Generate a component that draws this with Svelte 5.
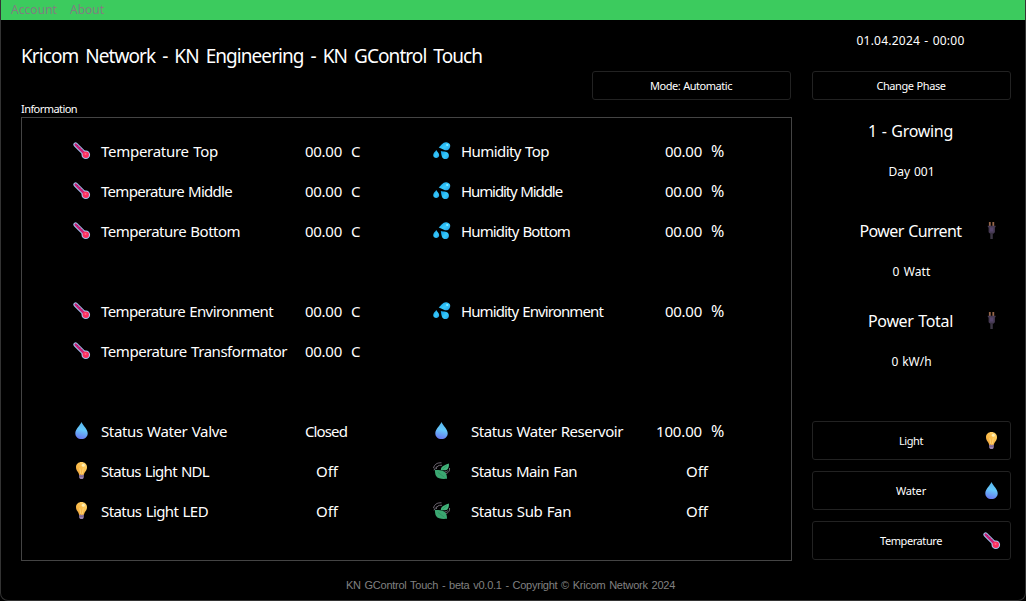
<script>
  const left = [
    { icon: 'thermo', label: 'Temperature Top', w: 117, value: '00.00', unit: 'C' },
    { icon: 'thermo', label: 'Temperature Middle', w: 131, value: '00.00', unit: 'C' },
    { icon: 'thermo', label: 'Temperature Bottom', w: 139, value: '00.00', unit: 'C' },
    null,
    { icon: 'thermo', label: 'Temperature Environment', w: 172, value: '00.00', unit: 'C' },
    { icon: 'thermo', label: 'Temperature Transformator', w: 186, value: '00.00', unit: 'C' },
    null,
    { icon: 'drop', label: 'Status Water Valve', w: 126, value: 'Closed', vw: 42 },
    { icon: 'bulb', label: 'Status Light NDL', w: 108, value: 'Off', vw: 22, shift: 11 },
    { icon: 'bulb', label: 'Status Light LED', w: 107, value: 'Off', vw: 22, shift: 11 }
  ];
  const right = [
    { icon: 'splash', label: 'Humidity Top', w: 88, value: '00.00', unit: '%' },
    { icon: 'splash', label: 'Humidity Middle', w: 101, value: '00.00', unit: '%' },
    { icon: 'splash', label: 'Humidity Bottom', w: 109, value: '00.00', unit: '%' },
    null,
    { icon: 'splash', label: 'Humidity Environment', w: 142, value: '00.00', unit: '%' },
    null,
    null,
    { icon: 'drop', label: 'Status Water Reservoir', w: 152, indent: true, value: '100.00', vw: 46, shift: -9, unit: '%' },
    { icon: 'leaf', label: 'Status Main Fan', w: 106, indent: true, value: 'Off', vw: 22, shift: 21 },
    { icon: 'leaf', label: 'Status Sub Fan', w: 100, indent: true, value: 'Off', vw: 22, shift: 21 }
  ];

  // Spreads the letters so that a caption fills its given width.
  function fit(node, width) {
    const n = node.textContent.length;
    const natural = node.getBoundingClientRect().width;
    node.style.letterSpacing = `${(width - natural) / n}px`;
  }
</script>

{#snippet icon(name)}
  <svg class="icon" width="18" height="18" viewBox="0 0 18 18">
    {#if name === 'thermo'}
      <path d="M2.6 2.6 L12.4 12.4" stroke="#9fc3ee" stroke-width="4.4" stroke-linecap="round" />
      <circle cx="12.8" cy="12.800" r="4.300" fill="#a5c6f4" />
      <path d="M2.700 2.700 L12 12" stroke="#c81f75" stroke-width="2.500" stroke-linecap="round" />
      <path d="M4.900 3.200l-.8.9M7.100 5.300l-.9 1M9.200 7.500l-.8.8" stroke="#5a2c68" stroke-width=".8" />
      <circle cx="12.800" cy="12.800" r="3.200" fill="#fb2f60" />
      <circle cx="12.500" cy="12" r="1" fill="#ff6a89" />
    {:else if name === 'splash'}
      <path d="M5.700 5.600C8 3.500 10-.2 13.400.2c3 .3 4.600 2.700 3.500 5.300-1 2.800-3.700 3.400-6 2.300C9 6.900 7.200 6.300 5.700 5.600z" fill="url(#cyan)" />
      <path d="M3.300 8C2.500 9.500.100 11 .2 13.200c.2 3.600 5.700 3.700 6 .1C6.300 11.100 4 9.700 3.300 8z" fill="url(#cyan)" />
      <path d="M7.800 9c2.700.8 7 .2 7.900 3.200.8 2.700-.8 4.900-3.200 4.900-4.200 0-4-4.800-4.700-8.100z" fill="url(#cyan)" />
      <circle cx="14.200" cy="3" r="1.100" fill="#8aecff" />
    {:else if name === 'drop'}
      <path d="M8.500 0C7.300 3.400 2.300 7 2.300 11.200c0 3.500 2.600 5.800 6.200 5.800s6.200-2.300 6.200-5.800C14.700 7 9.700 3.400 8.500 0z" fill="url(#water)" />
    {:else if name === 'bulb'}
      <path d="M6.100 12.200h4.700v2.500c0 1.500-.8 2.300-2.300 2.300s-2.400-.8-2.400-2.300z" fill="#9a83ad" />
      <path d="M6.200 14.200h4.500" stroke="#65517b" stroke-width=".8" />
      <path d="M8.500 0C5.300 0 3 2.100 3 5.200c0 3.600 2.600 4.400 3 7.400.5.500 4.500.5 5 0 .4-3 3-3.800 3-7.400C14 2.100 11.700 0 8.500 0z" fill="url(#amber)" />
      <path d="M6.800 6.300 7.900 12.200M10.300 6.300 9.200 12.200" stroke="#ffda7e" stroke-width=".8" />
      <circle cx="10.300" cy="3.200" r="1.500" fill="#fff0b6" />
    {:else if name === 'leaf'}
      <path d="M.5 6.200C1.300 2.400 4 .6 8.500.8M3.300 7C3.300 4.300 5.500 3 9 3.200M1 8.300C2 6 3 5.200 4.600 4.500" fill="none" stroke="#716975" stroke-width="1" />
      <path d="M16.500 6c.5 3-1.300 5.300-4.600 5.800M14.800 8.700c-.8.900-2 1.300-3.400 1.300" fill="none" stroke="#716975" stroke-width="1" />
      <path d="M1.800 7.800c5 .5 9.600.3 11.400 4.100.7 1.600.8 2.900.8 4.900-4.700.3-9.200.2-10.900-2.700-1-1.700-1.100-4.100-1.300-6.300z" fill="#3ba771" />
      <path d="M15.900 1.500c.4 3.900-.9 6.700-4 6.800-1.600.1-2.800-.1-4.100-.4C8.200 3.600 12 3.200 15.900 1.500z" fill="#42b47b" />
      <path d="M4.800 10.300 11.500 15.300M9.500 7.100 14 3.500" stroke="#2c8a5d" stroke-width=".6" />
    {:else}
      <path d="M6.800 0v5M10.300 0v5" stroke="#966649" stroke-width="1.800" />
      <path d="M4.800 3.700h7.800v1.400l-.7.5v4.600l-1.600 1.500H7.200L5.600 10.200V5.600l-.8-.5z" fill="#463a53" />
      <path d="M7 5.500h3.300v4H7z" fill="#55446a" />
      <path d="M7.300 11.500h2.500V17H7.300z" fill="#3a3442" />
    {/if}
  </svg>
{/snippet}

{#snippet list(rows)}
  <div class="list">
    {#each rows as r}
      <div class="row">
        {#if r}
          {@render icon(r.icon)}
          <div class="label" class:indent={r.indent}><span use:fit={r.w}>{r.label}</span></div>
          <div class="value" style:padding-left="{Math.max(r.shift ?? 0, 0)}px" style:text-indent="{Math.min(r.shift ?? 0, 0)}px"><span use:fit={r.vw ?? 37}>{r.value}</span></div>
          {#if r.unit}<div class="unit" class:percent={r.unit === '%'}>{r.unit}</div>{/if}
        {/if}
      </div>
    {/each}
  </div>
{/snippet}

<svg class="defs" width="0" height="0">
  <defs>
    <linearGradient id="cyan" x1="0" y1="0" x2="1" y2="1">
      <stop offset="0" stop-color="#0d9be8" /><stop offset=".55" stop-color="#37c9fa" /><stop offset="1" stop-color="#229ae5" />
    </linearGradient>
    <linearGradient id="water" x1=".6" y1="0" x2=".4" y2="1">
      <stop offset="0" stop-color="#55b5ee" /><stop offset=".45" stop-color="#66c8fb" /><stop offset="1" stop-color="#6878ef" />
    </linearGradient>
    <linearGradient id="amber" x1="1" y1="0" x2="0" y2="1">
      <stop offset="0" stop-color="#ffdc73" /><stop offset=".5" stop-color="#fbbd4c" /><stop offset="1" stop-color="#eda23c" />
    </linearGradient>
  </defs>
</svg>

<div class="window">
  <nav><span use:fit={46}>Account</span><span use:fit={34}>About</span></nav>
  <div class="body">
    <main>
      <h1><span use:fit={461}>Kricom Network - KN Engineering - KN GControl Touch</span></h1>
      <div class="bar"><button class="mode"><span use:fit={82}>Mode: Automatic</span></button></div>
      <div class="caption"><span use:fit={56}>Information</span></div>
      <section>
        {@render list(left)}
        {@render list(right)}
      </section>
    </main>
    <aside>
      <div class="date"><span use:fit={108}>01.04.2024 - 00:00</span></div>
      <button class="mode"><span use:fit={69}>Change Phase</span></button>
      <div class="head phase"><span use:fit={85}>1 - Growing</span></div>
      <div class="sub"><span use:fit={46}>Day 001</span></div>
      <div class="head"><span use:fit={102}>Power Current</span><i>{@render icon('plug')}</i></div>
      <div class="sub"><span use:fit={38}>0 Watt</span></div>
      <div class="head total"><span use:fit={85}>Power Total</span><i>{@render icon('plug')}</i></div>
      <div class="sub"><span use:fit={40}>0 kW/h</span></div>
      <div class="actions">
        <button><span use:fit={24}>Light</span><i>{@render icon('bulb')}</i></button>
        <button><span use:fit={30}>Water</span><i>{@render icon('drop')}</i></button>
        <button><span use:fit={62}>Temperature</span><i>{@render icon('thermo')}</i></button>
      </div>
    </aside>
  </div>
  <footer><span use:fit={329}>KN GControl Touch - beta v0.0.1 - Copyright © Kricom Network 2024</span></footer>
</div>

<style>
  :global(body) { background: #000; }
  .defs { display: block; }
  .window {
    box-sizing: border-box;
    width: 1026px;
    height: 601px;
    border: 1px solid #333;
    border-top: 0;
    border-radius: 0 0 8px 8px;
    background: #000;
    color: #fff;
    font-family: "Noto Sans", sans-serif;
    font-size: 15px;
    word-spacing: .06em;
    overflow: hidden;
    white-space: nowrap;
  }
  nav {
    display: flex;
    gap: 13px;
    height: 20px;
    padding-left: 10px;
    background: #3ccb5e;
    color: #808080;
    font-size: 12px;
    line-height: 20px;
  }
  .body { display: flex; gap: 20px; height: 551px; padding-left: 20px; }
  main { width: 771px; }
  h1 { margin: 0; padding-top: 23px; height: 28px; font-size: 19px; font-weight: 400; line-height: 27px; word-spacing: 3px; }
  .bar { display: flex; justify-content: flex-end; padding-right: 1px; }
  button {
    position: relative;
    display: flex;
    align-items: center;
    justify-content: center;
    box-sizing: border-box;
    width: 199px;
    height: 39px;
    padding: 0 1px 0 0;
    border: 1px solid #222;
    border-radius: 3px;
    background: #000;
    color: #fff;
    font: 11px "Noto Sans", sans-serif;
    word-spacing: .06em;
  }
  button.mode { height: 29px; }
  .caption { height: 17px; font-size: 11px; line-height: 17px; }
  section {
    display: flex;
    box-sizing: border-box;
    width: 771px;
    height: 444px;
    padding: 14px 0 0 51px;
    border: 1px solid #444;
  }
  .list { flex: none; width: 360px; }
  .row { display: flex; height: 40px; line-height: 39px; }
  .row .icon { margin-top: 10px; }
  .icon { display: block; flex: none; fill: none; }
  .label { box-sizing: border-box; flex: none; width: 214px; padding-left: 10px; }
  .label.indent { padding-left: 20px; }
  .value { box-sizing: border-box; flex: none; width: 46px; }
  .unit { flex: none; }
  .unit.percent { font-size: 16px; }
  aside { width: 199px; text-align: center; }
  .date { height: 51px; padding-right: 2px; font-size: 12px; line-height: 41px; }
  .head { position: relative; height: 40px; margin-top: 20px; padding-right: 2px; font-size: 16px; line-height: 39px; }
  .head.phase { margin-top: 12px; }
  .head.total { margin-top: 10px; }
  .sub { height: 40px; font-size: 12px; line-height: 39px; }
  i { position: absolute; right: 10px; top: 10px; }
  button i { right: 9px; }
  .actions { display: grid; gap: 11px; margin-top: 39px; }
  footer { padding-right: 5px; text-align: center; color: #808080; font: 11px/29px "Liberation Sans", Arial, sans-serif; }
</style>
